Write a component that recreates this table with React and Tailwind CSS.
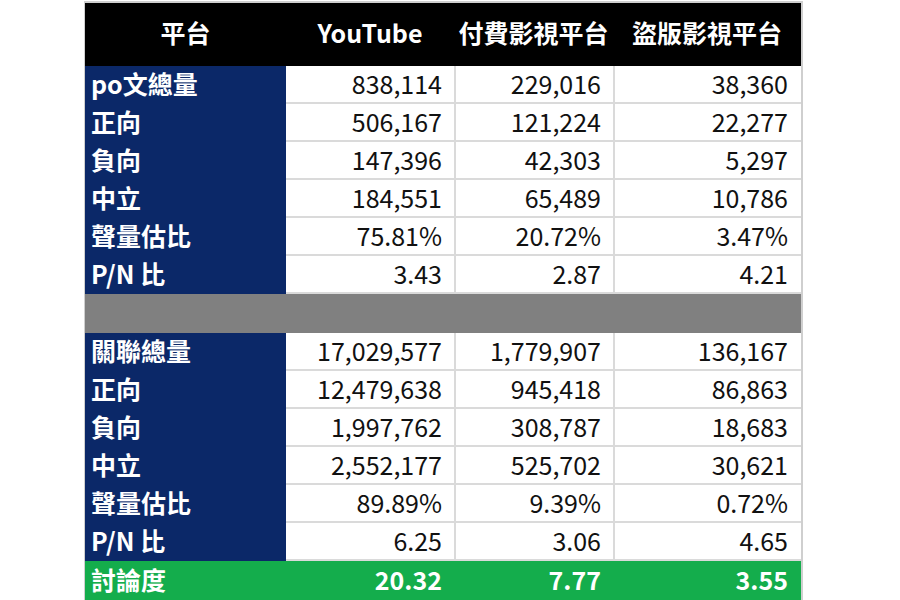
import React from "react";

const font = { fontFamily: '"Noto Sans CJK TC", "Noto Sans", sans-serif' };

const top = [
  ["po文總量", "838,114", "229,016", "38,360"],
  ["正向", "506,167", "121,224", "22,277"],
  ["負向", "147,396", "42,303", "5,297"],
  ["中立", "184,551", "65,489", "10,786"],
  ["聲量估比", "75.81%", "20.72%", "3.47%"],
  ["P/N 比", "3.43", "2.87", "4.21"],
];
const bottom = [
  ["關聯總量", "17,029,577", "1,779,907", "136,167"],
  ["正向", "12,479,638", "945,418", "86,863"],
  ["負向", "1,997,762", "308,787", "18,683"],
  ["中立", "2,552,177", "525,702", "30,621"],
  ["聲量估比", "89.89%", "9.39%", "0.72%"],
  ["P/N 比", "6.25", "3.06", "4.65"],
];

function Row({ r }) {
  return (
    <div className="grid grid-cols-[201px_168px_159px_188px] h-[38px]">
      <div className="bg-[#0b2868] text-white font-bold text-[25px] leading-none flex items-center pl-[6px] pb-[3px]">
        {r[0]}
      </div>
      <div className="bg-white text-[#111] text-[25px] leading-none flex items-center justify-end pr-[12px] pb-[1px] border-b-2 border-[#dadada]">
        {r[1]}
      </div>
      <div className="bg-white text-[#111] text-[25px] leading-none flex items-center justify-end pr-[12px] pb-[1px] border-b-2 border-l-2 border-[#dadada]">
        {r[2]}
      </div>
      <div className="bg-white text-[#111] text-[25px] leading-none flex items-center justify-end pr-[13px] pb-[1px] border-b-2 border-l-2 border-[#dadada]">
        {r[3]}
      </div>
    </div>
  );
}

export default function App() {
  return (
    <div className="w-[900px] h-[600px] bg-white overflow-hidden pl-[84px] pt-[1px]" style={font}>
      <div className="w-[719px] border-t-2 border-l border-r-2 border-[#cfcfcf]">
        <div className="grid grid-cols-[201px_168px_159px_188px] h-[63px] bg-black text-white font-bold text-[25px] leading-none pb-[4px]">
          <div className="flex items-center justify-center">平台</div>
          <div className="flex items-center justify-center">YouTube</div>
          <div className="flex items-center justify-center">付費影視平台</div>
          <div className="flex items-center justify-center">盜版影視平台</div>
        </div>
        {top.map((r, i) => (
          <Row key={"t" + i} r={r} />
        ))}
        <div className="h-[39px] bg-[#808080]" />
        {bottom.map((r, i) => (
          <Row key={"b" + i} r={r} />
        ))}
        <div className="grid grid-cols-[201px_168px_159px_188px] h-[40px] bg-[#14ad4c] text-white font-bold text-[25px] leading-none pb-[4px]">
          <div className="flex items-center pl-[6px]">討論度</div>
          <div className="flex items-center justify-end pr-[12px]">20.32</div>
          <div className="flex items-center justify-end pr-[12px]">7.77</div>
          <div className="flex items-center justify-end pr-[13px]">3.55</div>
        </div>
      </div>
    </div>
  );
}
